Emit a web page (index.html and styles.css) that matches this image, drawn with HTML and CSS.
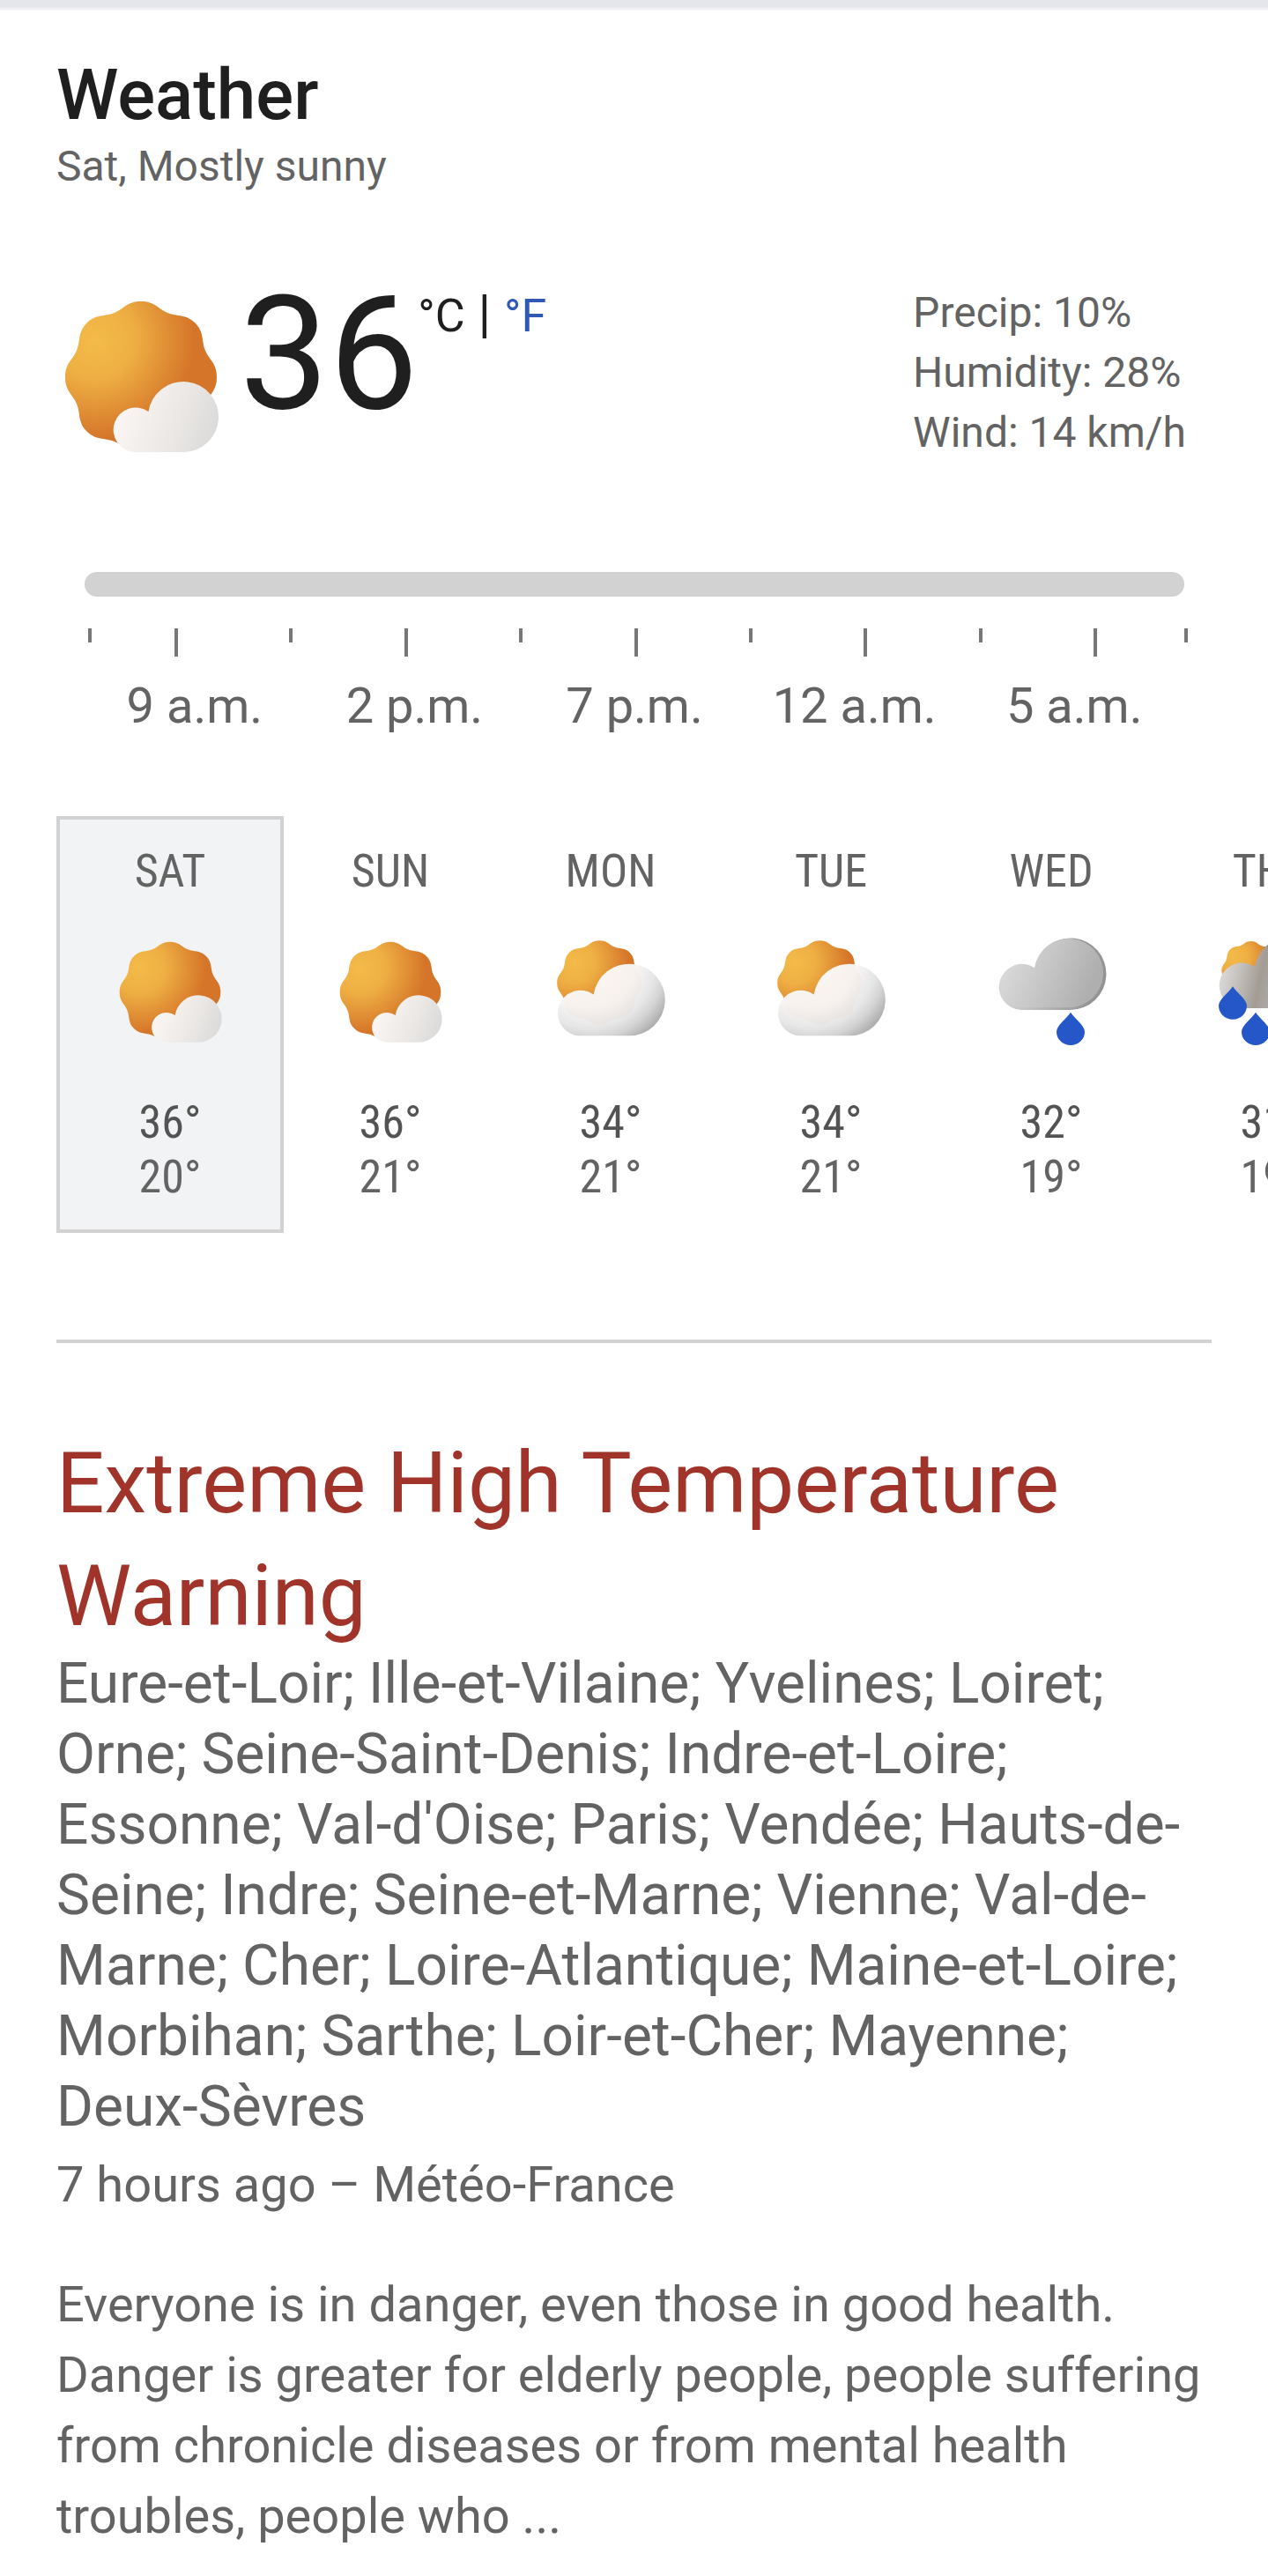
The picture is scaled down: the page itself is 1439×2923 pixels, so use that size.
FILE: index.html
```html
<!DOCTYPE html>
<html lang="en">
<head>
    <meta charset="UTF-8">
    <meta name="viewport" content="width=device-width, initial-scale=1.0">
    <title>Weather</title>
    <link rel="stylesheet" href="styles.css">
</head>
<body>

<!-- shared shapes for the weather icons -->
<svg class="defs" width="0" height="0" aria-hidden="true">
    <defs>
        <radialGradient id="sunFill" gradientUnits="userSpaceOnUse" cx="-52" cy="-42" r="112">
            <stop offset="0" stop-color="#f3bb49"/>
            <stop offset="0.4" stop-color="#eeae43"/>
            <stop offset="1" stop-color="#d57529"/>
        </radialGradient>
        <linearGradient id="smallCloudFill" gradientUnits="userSpaceOnUse" x1="10" y1="-50" x2="120" y2="-10">
            <stop offset="0" stop-color="#fbf6f3"/>
            <stop offset="0.6" stop-color="#e9e6e3"/>
            <stop offset="1" stop-color="#d8d8d8"/>
        </linearGradient>
        <radialGradient id="cloudFill" gradientUnits="userSpaceOnUse" cx="36" cy="-82" r="104">
            <stop offset="0" stop-color="#fefbfa"/>
            <stop offset="0.5" stop-color="#f8f5f4"/>
            <stop offset="0.7" stop-color="#e6e6e6"/>
            <stop offset="0.82" stop-color="#d2d2d2"/>
            <stop offset="1" stop-color="#a0a0a0"/>
        </radialGradient>
        <linearGradient id="rainCloudFill" gradientUnits="userSpaceOnUse" x1="5" y1="-50" x2="100" y2="-10">
            <stop offset="0" stop-color="#dadada"/>
            <stop offset="1" stop-color="#afafaf"/>
        </linearGradient>
        <linearGradient id="rainCloudEdge" gradientUnits="userSpaceOnUse" x1="5" y1="-30" x2="100" y2="-30">
            <stop offset="0" stop-color="#d4d4d4"/>
            <stop offset="1" stop-color="#949494"/>
        </linearGradient>
        <linearGradient id="showerCloudFill" gradientUnits="userSpaceOnUse" x1="0" y1="-40" x2="70" y2="-25">
            <stop offset="0" stop-color="#dddddd"/>
            <stop offset="0.3" stop-color="#c6c2be"/>
            <stop offset="0.65" stop-color="#a39c95"/>
            <stop offset="1" stop-color="#b0b0b0"/>
        </linearGradient>
        <path id="sun" d="M0-86C16-86 19.1-77.6 30.2-73C41.3-68.4 51-72 61.5-61.5C72-51 68.4-41.3 73-30.2C77.6-19.1 86-16 86 0C86 16 77.6 19.1 73 30.2C68.4 41.3 72 51 61.5 61.5C51 72 41.3 68.4 30.2 73C19.1 77.6 14 84 0 84C-14 84-19.1 77.6-30.2 73C-41.3 68.4-51 72-61.5 61.5C-72 51-68.4 41.3-73 30.2C-77.6 19.1-86 16-86 0C-86-16-77.6-19.1-73-30.2C-68.4-41.3-72-51-61.5-61.5C-51-72-41.3-68.4-30.2-73C-19.1-77.6-16-86 0-86Z"/>
        <path id="cloud" d="M25 0A25.3 25.3 0 1 1 40.5-46A40 40 0 1 1 80 0Z"/>
        <path id="drop" fill="#2657c9" d="M0 0C6 10 24 22 24 33A24 23 0 0 1-24 33C-24 22-6 10 0 0Z"/>
    </defs>
    <symbol id="mostlySunny" viewBox="0 0 192 192">
        <use href="#sun" fill="url(#sunFill)" transform="translate(96 96)"/>
        <use href="#cloud" fill="url(#smallCloudFill)" transform="translate(64 181)"/>
    </symbol>
    <symbol id="partlyCloudy" viewBox="0 0 192 192">
        <use href="#sun" fill="url(#sunFill)" transform="translate(77 80) scale(0.84)"/>
        <use href="#cloud" fill="url(#cloudFill)" fill-opacity="0.97" transform="translate(5 170) scale(1.53)"/>
    </symbol>
    <symbol id="rain" viewBox="0 0 192 192">
        <use href="#cloud" fill="url(#rainCloudEdge)" transform="translate(6 126) scale(1.53)"/>
        <use href="#cloud" fill="url(#rainCloudFill)" transform="translate(8 122) scale(1.47)"/>
        <use href="#drop" transform="translate(129 130)"/>
    </symbol>
    <symbol id="showers" viewBox="0 0 192 192">
        <use href="#sun" fill="url(#sunFill)" transform="translate(61 59) scale(0.58)"/>
        <use href="#cloud" fill="url(#showerCloudFill)" transform="translate(6 123) scale(1.53)"/>
        <use href="#drop" transform="translate(30 86)"/>
        <use href="#drop" transform="translate(69 130)"/>
    </symbol>
</svg>

<div class="top-edge"></div>

<main class="weather">
    <header>
        <h1>Weather</h1>
        <p class="summary">Sat, Mostly sunny</p>
    </header>

    <section class="current">
        <div class="now">
            <svg class="now-icon" role="img" aria-label="Mostly sunny"><use href="#mostlySunny"/></svg>
            <span class="now-temp">36</span>
            <span class="units">°C<span class="divider"> | </span><a href="#">°F</a></span>
        </div>
        <div class="details">
            <div>Precip: 10%</div>
            <div>Humidity: 28%</div>
            <div>Wind: 14 km/h</div>
        </div>
    </section>

    <section class="hours">
        <input class="hour-slider" type="range" min="0" max="24" value="0" aria-label="Hour">
        <div class="ticks">
            <span></span><span class="long"></span>
            <span></span><span class="long"></span>
            <span></span><span class="long"></span>
            <span></span><span class="long"></span>
            <span></span><span class="long"></span>
            <span></span>
        </div>
        <div class="hour-labels">
            <span>9 a.m.</span>
            <span>2 p.m.</span>
            <span>7 p.m.</span>
            <span>12 a.m.</span>
            <span>5 a.m.</span>
        </div>
    </section>

    <section class="days">
        <button class="day selected">
            <span class="day-name">SAT</span>
            <svg class="day-icon" aria-hidden="true"><use href="#mostlySunny"/></svg>
            <span class="high">36°</span>
            <span class="low">20°</span>
        </button>
        <button class="day">
            <span class="day-name">SUN</span>
            <svg class="day-icon" aria-hidden="true"><use href="#mostlySunny"/></svg>
            <span class="high">36°</span>
            <span class="low">21°</span>
        </button>
        <button class="day">
            <span class="day-name">MON</span>
            <svg class="day-icon" aria-hidden="true"><use href="#partlyCloudy"/></svg>
            <span class="high">34°</span>
            <span class="low">21°</span>
        </button>
        <button class="day">
            <span class="day-name">TUE</span>
            <svg class="day-icon" aria-hidden="true"><use href="#partlyCloudy"/></svg>
            <span class="high">34°</span>
            <span class="low">21°</span>
        </button>
        <button class="day">
            <span class="day-name">WED</span>
            <svg class="day-icon" aria-hidden="true"><use href="#rain"/></svg>
            <span class="high">32°</span>
            <span class="low">19°</span>
        </button>
        <button class="day">
            <span class="day-name">THU</span>
            <svg class="day-icon" aria-hidden="true"><use href="#showers"/></svg>
            <span class="high">31°</span>
            <span class="low">19°</span>
        </button>
    </section>

    <hr>

    <article class="alert">
        <h2>Extreme High Temperature Warning</h2>
        <p class="areas">Eure-et-Loir; Ille-et-Vilaine; Yvelines; Loiret; Orne; Seine-Saint-Denis; Indre-et-Loire; Essonne; Val-d'Oise; Paris; Vendée; Hauts-de-Seine; Indre; Seine-et-Marne; Vienne; Val-de-Marne; Cher; Loire-Atlantique; Maine-et-Loire; Morbihan; Sarthe; Loir-et-Cher; Mayenne; Deux-Sèvres</p>
        <p class="source">7 hours ago – Météo-France</p>
        <p class="text">Everyone is in danger, even those in good health. Danger is greater for elderly people, people suffering from chronicle diseases or from mental health troubles, people who ...</p>
    </article>
</main>

</body>
</html>
```
FILE: styles.css
```css
* {
    box-sizing: border-box;
}

body {
    font-family: Roboto, Arial, sans-serif;
    margin: 0;
    background: #fff;
    color: #636363;
    overflow-x: hidden;
}

h1, h2, p {
    margin: 0;
    font-weight: 400;
}

.defs {
    position: absolute;
}

.top-edge {
    height: 12px;
    background: linear-gradient(#e5e6eb 7px, #f8f8f9 12px);
}

.weather {
    padding: 48px 64px 26px;
}

h1 {
    font-size: 80px;
    line-height: 96px;
    font-weight: 500;
    color: #1f1f1f;
}

.summary {
    font-size: 48px;
    line-height: 66px;
}

/* current conditions */
.current {
    display: flex;
    justify-content: space-between;
    margin-top: 99px;
}

.now {
    display: flex;
    align-items: flex-start;
    padding-top: 11px;
    color: #1f1f1f;
}

.now-icon {
    width: 192px;
    height: 192px;
    margin-right: 16px;
}

.now-temp {
    font-size: 180px;
    line-height: 140px;
}

.units {
    font-size: 52px;
    line-height: 48px;
}

.divider {
    font-size: 60px;
}

.units a {
    color: #2f59b5;
    text-decoration: none;
}

.details {
    margin-right: 29px;
    font-size: 48px;
    line-height: 68px;
}

/* hourly slider */
.hours {
    margin: 124px 31px 0 32px;
}

.hour-slider {
    display: block;
    appearance: none;
    width: 100%;
    height: 28px;
    margin: 0;
    border-radius: 14px;
    background: #d2d2d2;
}

.hour-slider::-webkit-slider-thumb {
    appearance: none;
    width: 28px;
    height: 28px;
    background: transparent;
}

.ticks {
    display: grid;
    grid-template-columns: 98fr repeat(8, 131fr) 103fr 4px;
    margin: 36px -4px 0 4px;
    height: 32px;
}

.ticks span {
    width: 4px;
    height: 16px;
    background: #777;
}

.ticks .long {
    height: 32px;
}

.hour-labels {
    display: grid;
    grid-template-columns: repeat(5, 1fr);
    margin-top: 20px;
    font-size: 56px;
    line-height: 72px;
    text-align: center;
}

/* daily strip, runs off the right edge */
.days {
    display: flex;
    margin: 89px -64px 0 0;
    overflow-x: auto;
    scrollbar-width: none;
}

.day {
    display: flex;
    flex: none;
    flex-direction: column;
    align-items: center;
    width: 258px;
    margin: 0 -8px 0 0;
    padding: 28px 0;
    border: 4px solid transparent;
    background: none;
    color: #636363;
    font-family: "Roboto Condensed", Roboto, sans-serif;
    font-size: 52px;
    line-height: 62px;
}

.day.selected {
    border-color: #d2d2d2;
    background: #f1f3f4;
}

.day-icon {
    width: 128px;
    height: 128px;
    margin: 42px 0 53px;
}

.high {
    color: #535353;
}

hr {
    height: 4px;
    margin: 121px 0 95px;
    border: 0;
    background: #d2d2d2;
}

/* alert */
.alert h2 {
    font-size: 96px;
    line-height: 128px;
    margin-bottom: -4px;
    color: #a0342b;
}

.areas {
    font-size: 64px;
    line-height: 80px;
}

.source {
    margin-top: 8px;
    font-size: 56px;
    line-height: 80px;
}

.text {
    margin-top: 56px;
    font-size: 56px;
    line-height: 80px;
}
```
